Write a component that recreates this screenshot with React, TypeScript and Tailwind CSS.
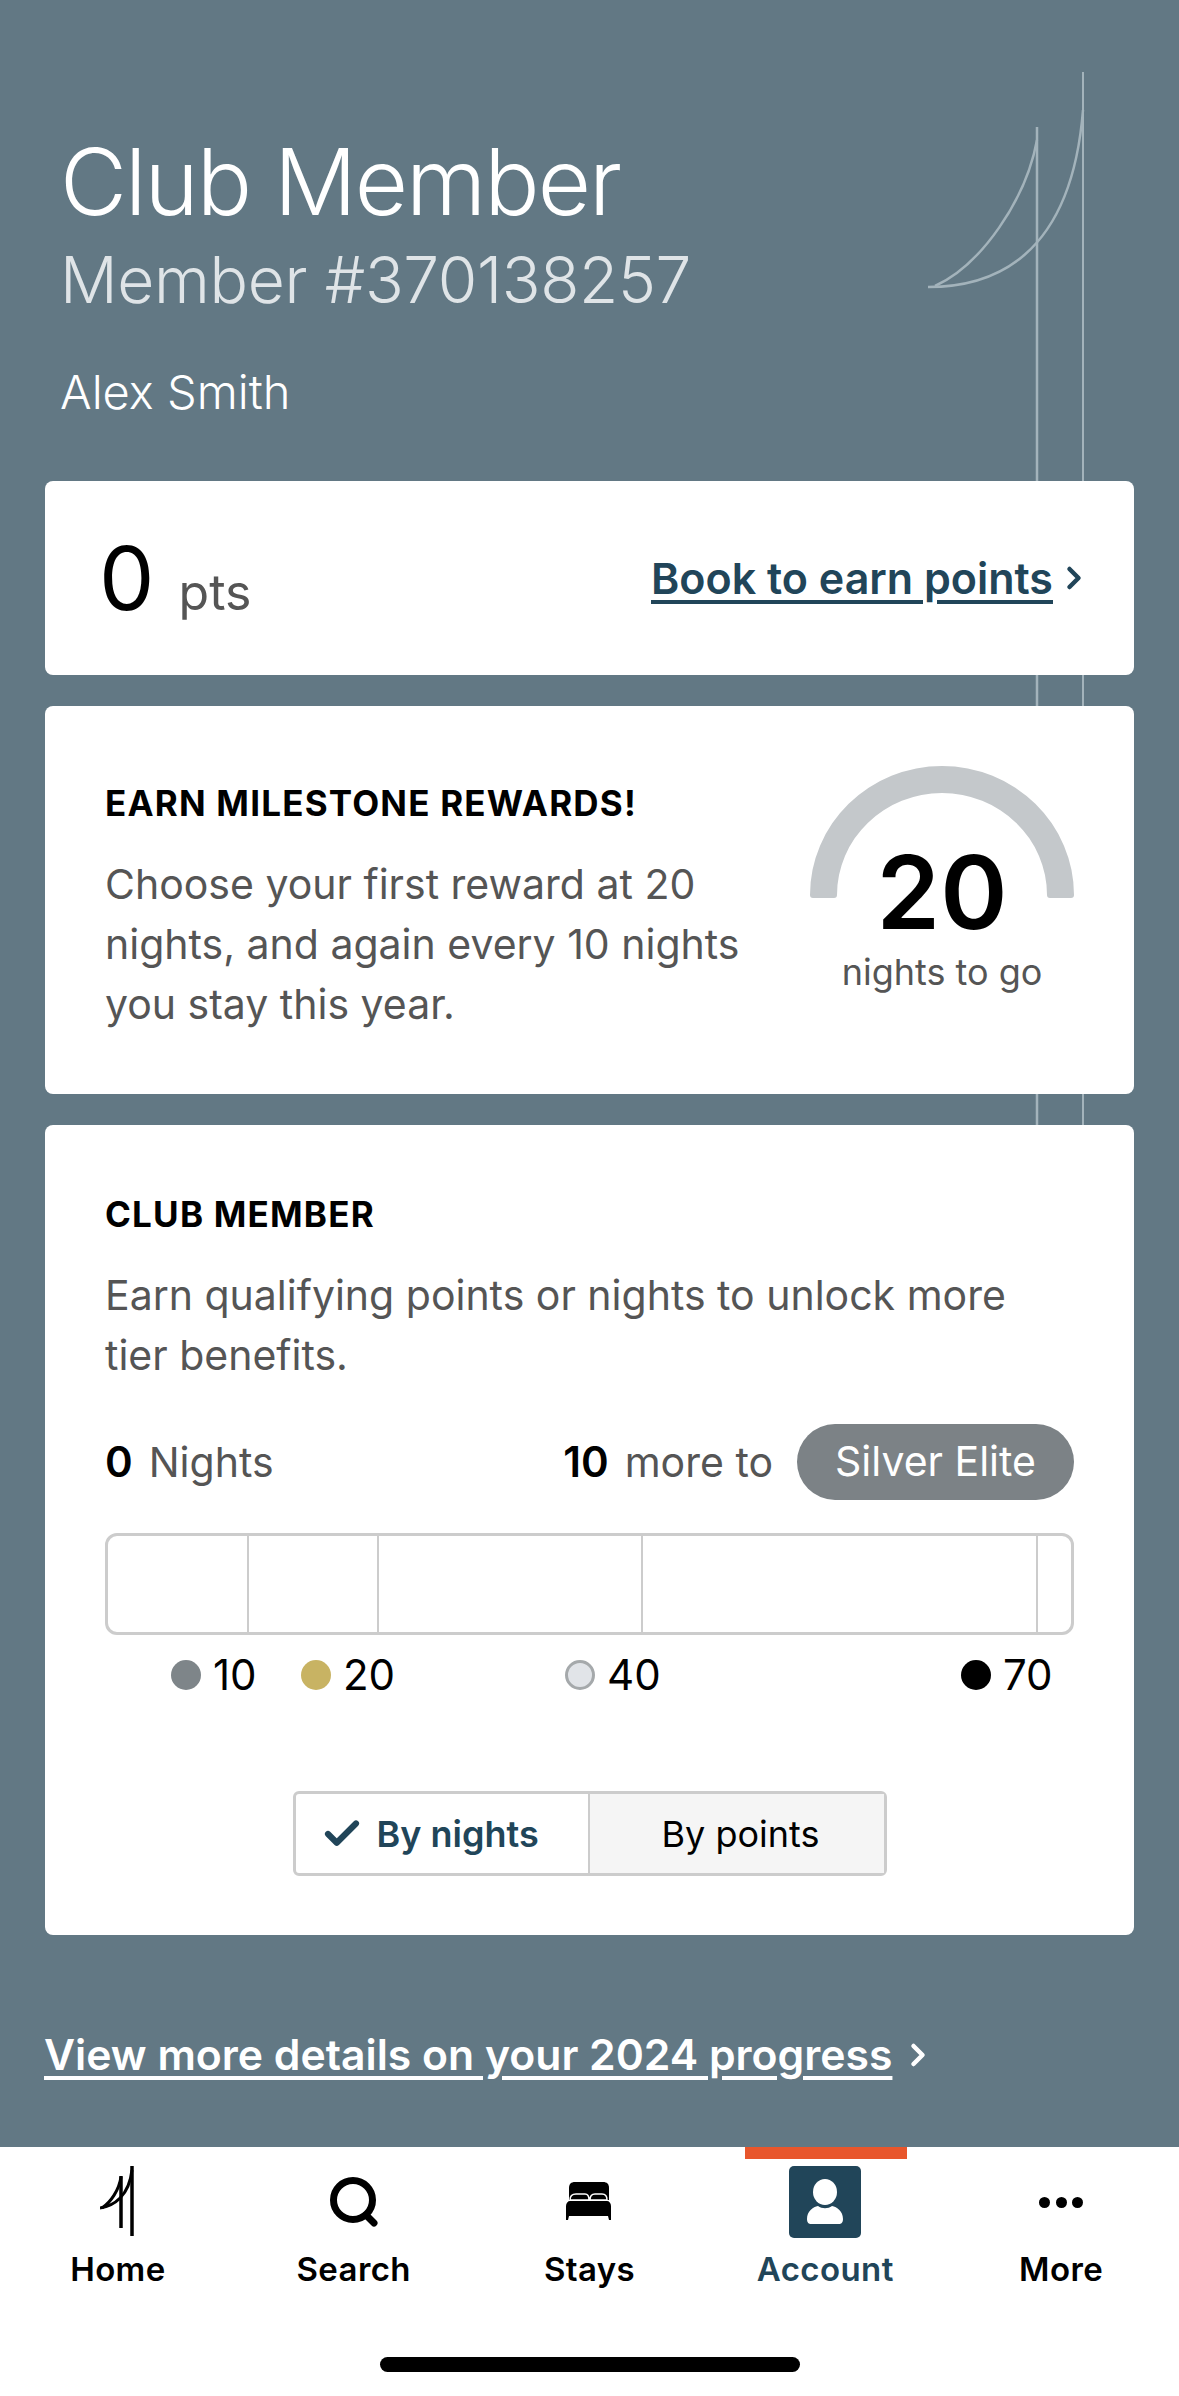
import React from 'react';
import { ChevronRight, Check } from 'lucide-react';

const ticks = [
  { label: '10', dot: 'bg-[#7e8589]', width: 'w-[130px]' },
  { label: '20', dot: 'bg-[#c8b363]', width: 'w-[264px]' },
  { label: '40', dot: 'bg-[#e1e4e8] border-[3px] border-[#a5a9ab]', width: 'w-[396px]' },
  { label: '70', dot: 'bg-black', width: 'w-auto' },
];

const HomeIcon = () => (
  <svg width="36" height="72" viewBox="0 0 36 72" fill="none" stroke="black">
    <path d="M32 0V70" strokeWidth="3.5" />
    <path d="M21 10V62" strokeWidth="3.5" />
    <path d="M0 42C14 40 29 30 32 4" strokeWidth="3" />
    <path d="M2 42C11 36 19 24 21 11" strokeWidth="3" />
  </svg>
);

const SearchIcon = () => (
  <svg width="48" height="50" viewBox="0 0 48 50" fill="none" stroke="black" strokeWidth="7">
    <circle cx="23" cy="23" r="19.5" />
    <path d="M36 38L44 46" strokeLinecap="round" />
  </svg>
);

const BedIcon = () => (
  <svg width="46" height="40" viewBox="0 0 46 40">
    <path d="M3 6C3 2 5 0 9 0H37C41 0 43 2 43 6V18H3Z" fill="black" />
    <path d="M0 24C0 21 2 19 4 19H41C43 19 45 21 45 24V38H43L42 34H3L2 38H0Z" fill="black" />
    <path d="M4 18C4 14 6 12 10 12H19C22 12 23 14 23 18ZM24 18C24 14 26 12 29 12H36C39 12 41 14 41 18Z" fill="black" stroke="white" strokeWidth="1.5" />
  </svg>
);

const AccountIcon = () => (
  <div className="flex h-[72px] w-[72px] items-center justify-center rounded-[5px] bg-[#214559]">
    <svg width="36" height="46" viewBox="0 0 36 46" fill="white">
      <ellipse cx="18" cy="13" rx="12" ry="13" />
      <path d="M0 40C0 32 6 28 11 27C15 30 21 30 25 27C30 28 36 32 36 40C36 44 34 45 32 45H4C2 45 0 44 0 40Z" />
    </svg>
  </div>
);

const MoreIcon = () => (
  <div className="flex h-[72px] items-center gap-[5.5px]">
    <span className="h-[11px] w-[11px] rounded-full bg-black" />
    <span className="h-[11px] w-[11px] rounded-full bg-black" />
    <span className="h-[11px] w-[11px] rounded-full bg-black" />
  </div>
);

const navTabs = [
  { name: 'Home', icon: <HomeIcon /> },
  { name: 'Search', icon: <SearchIcon /> },
  { name: 'Stays', icon: <BedIcon /> },
  { name: 'Account', icon: <AccountIcon />, active: true },
  { name: 'More', icon: <MoreIcon /> },
];

export default function App() {
  return (
    <div className="relative flex h-[2396px] w-[1179px] flex-col overflow-hidden bg-[#627884] font-['Inter',sans-serif]">
      {/* Sail mark */}
      <svg className="absolute left-[921px] top-[70px]" width="170" height="1060" viewBox="0 0 170 1060" fill="none" stroke="#a3b3bb" strokeWidth="2.5">
        <path d="M116 57V1060" />
        <path d="M162 2V1060" strokeWidth="2" />
        <path d="M7 217C70 217 150 190 162 40" />
        <path d="M14 216C60 195 105 130 116 70" />
      </svg>

      {/* Header */}
      <div className="relative px-[60px] pt-[129px]">
        <h1 className="text-[92px] leading-[106px] font-light tracking-[-2px] text-white">Club Member</h1>
        <p className="mt-[6px] text-[64px] leading-[78px] font-light tracking-[-0.35px] text-[#dfe4e7]">Member #370138257</p>
        <p className="mt-[45px] text-[47px] leading-[56px] font-light text-white">Alex Smith</p>
      </div>

      {/* Cards */}
      <div className="relative mt-[61px] flex flex-col gap-[31px] px-[45px]">
        <div className="flex h-[194px] items-center justify-between rounded-[8px] bg-white pr-[42px] pl-[54px]">
          <div className="flex items-baseline gap-[24px]">
            <span className="text-[88px] leading-none font-normal text-black">0</span>
            <span className="text-[50px] leading-none font-normal text-[#555]">pts</span>
          </div>
          <div className="flex items-center gap-[3px]">
            <a className="text-[43px] leading-[50px] font-semibold text-[#214559] underline underline-offset-[6px]">Book to earn points</a>
            <ChevronRight size={36} strokeWidth={3} className="text-[#214559]" />
          </div>
        </div>

        <div className="flex h-[388px] items-start justify-between rounded-[8px] bg-white px-[60px] pt-[76px]">
          <div className="w-[680px]">
            <h2 className="text-[35px] leading-[42px] font-bold tracking-[1.2px] text-black">EARN MILESTONE REWARDS!</h2>
            <p className="mt-[30px] text-[41px] leading-[60px] text-[#555]">
              Choose your first reward at 20 nights, and again every 10 nights you stay this year.
            </p>
          </div>
          <div className="relative mt-[-16px] flex w-[264px] flex-col items-center">
            <svg className="absolute top-0 left-0" width="264" height="132" viewBox="0 0 264 132" fill="#c4c8cb">
              <path d="M0 129A132 129 0 0 1 264 129Q264 132 261 132H240Q237 132 237 129A105 102 0 0 0 27 129Q27 132 24 132H3Q0 132 0 129Z" />
            </svg>
            <span className="mt-[66px] text-[102px] leading-[120px] font-semibold text-black">20</span>
            <span className="mt-[-1px] text-[36px] leading-[42px] text-[#555]">nights to go</span>
          </div>
        </div>

        <div className="h-[810px] rounded-[8px] bg-white px-[60px] pt-[68px]">
          <h2 className="text-[35px] leading-[42px] font-bold tracking-[1.2px] text-black">CLUB MEMBER</h2>
          <p className="mt-[30px] text-[41px] leading-[60px] text-[#555]">
            Earn qualifying points or nights to unlock more tier benefits.
          </p>

          <div className="mt-[39px] flex h-[76px] items-center justify-between">
            <div className="flex items-baseline gap-[16px]">
              <span className="text-[42px] font-semibold text-black">0</span>
              <span className="text-[41px] text-[#555]">Nights</span>
            </div>
            <div className="flex items-center gap-[24px]">
              <div className="flex items-baseline gap-[16px]">
                <span className="text-[42px] font-semibold text-black">10</span>
                <span className="text-[41px] text-[#555]">more to</span>
              </div>
              <span className="flex h-[76px] w-[277px] items-center justify-center rounded-full bg-[#7c8286] text-[41px] text-white">Silver Elite</span>
            </div>
          </div>

          {/* Progress bar */}
          <div className="mt-[33px] grid h-[102px] grid-cols-[141px_130px_264px_395px_1fr] rounded-[12px] border-[3px] border-[#cccccc]">
            <div className="border-r-2 border-[#cccccc]" />
            <div className="border-r-2 border-[#cccccc]" />
            <div className="border-r-2 border-[#cccccc]" />
            <div className="border-r-2 border-[#cccccc]" />
            <div />
          </div>

          {/* Legend */}
          <div className="mt-[16px] flex items-center pl-[66px]">
            {ticks.map((t) => (
              <div key={t.label} className={`flex items-center gap-[12px] ${t.width}`}>
                <span className={`h-[30px] w-[30px] rounded-full ${t.dot}`} />
                <span className="text-[42px] leading-[48px] text-black">{t.label}</span>
              </div>
            ))}
          </div>

          {/* Toggle */}
          <div className="mx-auto mt-[92px] flex h-[85px] w-[594px] rounded-[6px] border-[3px] border-[#cccccc]">
            <div className="flex w-[294px] items-center gap-[14px] border-r-2 border-[#cccccc] pl-[25px]">
              <Check size={42} strokeWidth={3.5} className="text-[#214559]" />
              <span className="text-[36px] font-semibold text-[#214559]">By nights</span>
            </div>
            <div className="flex flex-1 items-center justify-center bg-[#f5f5f5] pl-[8px]">
              <span className="text-[36px] text-black">By points</span>
            </div>
          </div>
        </div>
      </div>

      <div className="relative mt-[95px] flex items-center gap-[8px] px-[44px]">
        <a className="text-[42.7px] leading-[50px] font-semibold text-white underline underline-offset-[6px]">View more details on your 2024 progress</a>
        <ChevronRight size={36} strokeWidth={3} className="text-white" />
      </div>

      {/* Bottom nav */}
      <div className="absolute right-0 bottom-0 left-0 h-[249px] bg-white">
        <div className="grid grid-cols-5">
          {navTabs.map((tab) => (
            <div key={tab.name} className="relative flex flex-col items-center pt-[19px]">
              {tab.active && <span className="absolute top-0 left-[38px] h-[12px] w-[162px] bg-[#e8562c]" />}
              <div className="flex h-[72px] items-center justify-center">{tab.icon}</div>
              <span className={`mt-[11px] text-[33px] leading-[40px] font-semibold tracking-[0.4px] ${tab.active ? 'text-[#214559]' : 'text-black'}`}>{tab.name}</span>
            </div>
          ))}
        </div>
        <div className="absolute top-[210px] left-[380px] h-[15px] w-[420px] rounded-full bg-black" />
      </div>
    </div>
  );
}
